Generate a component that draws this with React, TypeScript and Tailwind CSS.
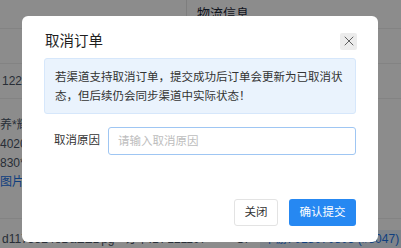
// App.tsx
import React from "react";
import { X } from "lucide-react";

const font = "font-['Liberation_Sans','Noto_Sans_CJK_SC',sans-serif]";

const BackgroundTable: React.FC = () => {
  return (
    <div className="flex flex-col w-full h-full bg-white text-[12px] text-gray-600">
      <div className="flex h-[31px] border-b border-[#eeeeee]">
        <div className="w-[187px] border-r border-[#e6e6e6]" />
        <div className="flex items-center pl-[10px] text-[13px] text-gray-800">物流信息</div>
      </div>
      <div className="h-[37px] border-b border-[#eeeeee]" />
      <div className="flex items-center h-[37px] border-b border-[#eeeeee] pl-[2px]">1224</div>
      <div className="flex flex-col h-[127px] border-b border-[#eeeeee] pt-[17px] leading-[19px]">
        <span>养*耀</span>
        <span>40200</span>
        <span>830*</span>
        <span className="text-[#1a73e8]">图片</span>
      </div>
      <div className="flex items-start pt-[11px] whitespace-nowrap">
        <span className="pl-[2px]">d1175524eDaEEDpg</span>
        <span className="ml-[10px]">订单ID: 121107</span>
        <span className="ml-[18px]">-- Ol</span>
        <span className="ml-[12px] bg-[#e8f1fc] px-[4px] text-[#1a73e8]">下游: 018070805 (#8047)</span>
      </div>
    </div>
  );
};

const CancelOrderModal: React.FC = () => {
  return (
    <div className="absolute left-[22px] top-[16px] w-[356px] h-[226px] rounded-[6px] bg-white px-[22px] flex flex-col">
      <div className="flex items-center justify-between h-[18px] mt-[16px]">
        <h2 className="text-[14.5px] leading-[18px] text-[#1f1f1f] pl-[1px]">取消订单</h2>
        <button className="flex items-center justify-center w-[17px] h-[17px] -mr-[1px] rounded-[2px] bg-[#ececec] text-[#555]">
          <X size={16} strokeWidth={1.4} />
        </button>
      </div>
      <div className="mt-[8px] h-[56px] rounded-[3px] border border-[#d6e7fb] bg-[#eaf3fd] pl-[10px] pr-[8px] pt-[9px] text-[11.5px] leading-[19px] text-[#333]">
        若渠道支持取消订单，提交成功后订单会更新为已取消状态，但后续仍会同步渠道中实际状态！
      </div>
      <div className="flex items-center mt-[13px]">
        <label className="w-[64px] pl-[10px] text-[11.5px] text-[#333]">取消原因</label>
        <input
          className="flex-1 h-[28px] rounded-[3px] border border-[#9fc6f3] px-[9px] text-[11.5px] text-[#333] outline-none placeholder:text-[#bdbdbd]"
          placeholder="请输入取消原因"
        />
      </div>
      <div className="flex justify-end gap-[11px] mt-[44px]">
        <button className="w-[44px] h-[27px] rounded-[3px] border border-[#e3e3e3] bg-white text-[11.5px] text-[#333]">关闭</button>
        <button className="w-[67px] h-[27px] rounded-[3px] bg-[#2688f2] text-[11.5px] text-white">确认提交</button>
      </div>
    </div>
  );
};

export default function App() {
  return (
    <div className={`relative w-[401px] h-[248px] overflow-hidden ${font}`}>
      <BackgroundTable />
      <div className="absolute inset-0 bg-black/45" />
      <CancelOrderModal />
    </div>
  );
}
